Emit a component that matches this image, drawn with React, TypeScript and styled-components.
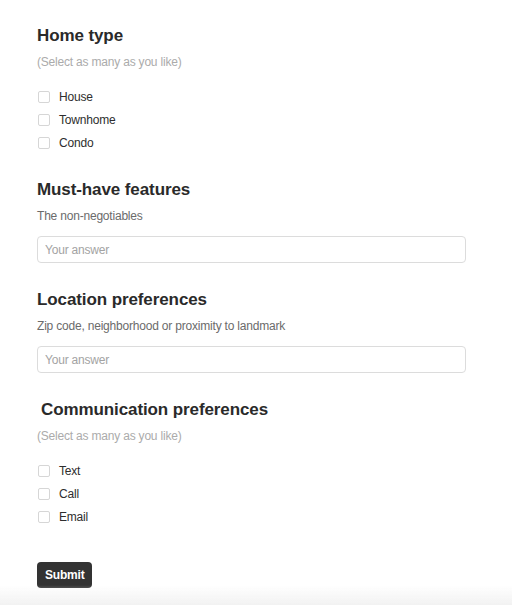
import React from 'react';
import styled, { createGlobalStyle } from 'styled-components';

const GlobalStyle = createGlobalStyle`
    html, body {
        margin: 0;
        padding: 0;
        background: #fff;
        font-family: "Liberation Sans", Arial, sans-serif;
        color: #2b2b2b;
    }
`;

const Page = styled.form`
    width: 429px;
    padding: 24px 0 0 37px;
    display: flex;
    flex-direction: column;
`;

const Section = styled.div<{ $indent?: boolean }>`
    display: flex;
    flex-direction: column;
    margin-bottom: 24px;

    .Title {
        margin: 0 0 0 ${p => (p.$indent ? '4px' : '0')};
        font-size: 17px;
        line-height: 24px;
        font-weight: 700;
        letter-spacing: -0.1px;
        color: #2a2a2a;
    }
`;

const Hint = styled.p<{ $muted?: boolean }>`
    margin: 5px 0 0;
    font-size: 12px;
    line-height: 18px;
    letter-spacing: -0.2px;
    color: ${p => (p.$muted ? '#ababab' : '#6b6b6b')};
`;

const Options = styled.div`
    display: flex;
    flex-direction: column;
    margin-top: 14px;
`;

const Option = styled.label`
    display: flex;
    align-items: center;
    height: 23px;
    font-size: 12px;
    letter-spacing: -0.2px;
    color: #2e2e2e;
    cursor: pointer;

    input {
        appearance: none;
        width: 12px;
        height: 12px;
        margin: 0 9px 0 1px;
        border: 1px solid #d6d6d6;
        border-radius: 2px;
        background: #fff;
    }
`;

const Answer = styled.input`
    margin: 11px 0 1px;
    box-sizing: border-box;
    width: 100%;
    height: 27px;
    padding: 0 7px;
    border: 1px solid #dcdcdc;
    border-radius: 4px;
    font-family: inherit;
    font-size: 12px;
    letter-spacing: -0.2px;
    color: #2e2e2e;
    outline: none;

    &::placeholder {
        color: #a3a3a3;
    }
`;

const Submit = styled.button`
    align-self: flex-start;
    margin-top: 10px;
    height: 26px;
    padding: 0 8px;
    border: none;
    border-radius: 4px;
    background: #333;
    color: #fff;
    font-family: inherit;
    font-size: 12px;
    font-weight: 700;
    letter-spacing: -0.2px;
    cursor: pointer;
`;

const BottomFade = styled.div`
    position: fixed;
    left: 0;
    right: 0;
    bottom: 0;
    height: 20px;
    background: linear-gradient(to bottom, rgba(240, 240, 240, 0), #f2f2f2);
    pointer-events: none;
`;

const App = () => {
    return (
        <>
            <GlobalStyle />
            <Page onSubmit={e => e.preventDefault()}>
                <Section>
                    <h2 className="Title">Home type</h2>
                    <Hint $muted>(Select as many as you like)</Hint>
                    <Options>
                        {['House', 'Townhome', 'Condo'].map(o => (
                            <Option key={o}><input type="checkbox" />{o}</Option>
                        ))}
                    </Options>
                </Section>
                <Section>
                    <h2 className="Title">Must-have features</h2>
                    <Hint>The non-negotiables</Hint>
                    <Answer placeholder="Your answer" />
                </Section>
                <Section>
                    <h2 className="Title">Location preferences</h2>
                    <Hint>Zip code, neighborhood or proximity to landmark</Hint>
                    <Answer placeholder="Your answer" />
                </Section>
                <Section $indent>
                    <h2 className="Title">Communication preferences</h2>
                    <Hint $muted>(Select as many as you like)</Hint>
                    <Options>
                        {['Text', 'Call', 'Email'].map(o => (
                            <Option key={o}><input type="checkbox" />{o}</Option>
                        ))}
                    </Options>
                </Section>
                <Submit type="submit">Submit</Submit>
            </Page>
            <BottomFade />
        </>
    );
};

export default App;
